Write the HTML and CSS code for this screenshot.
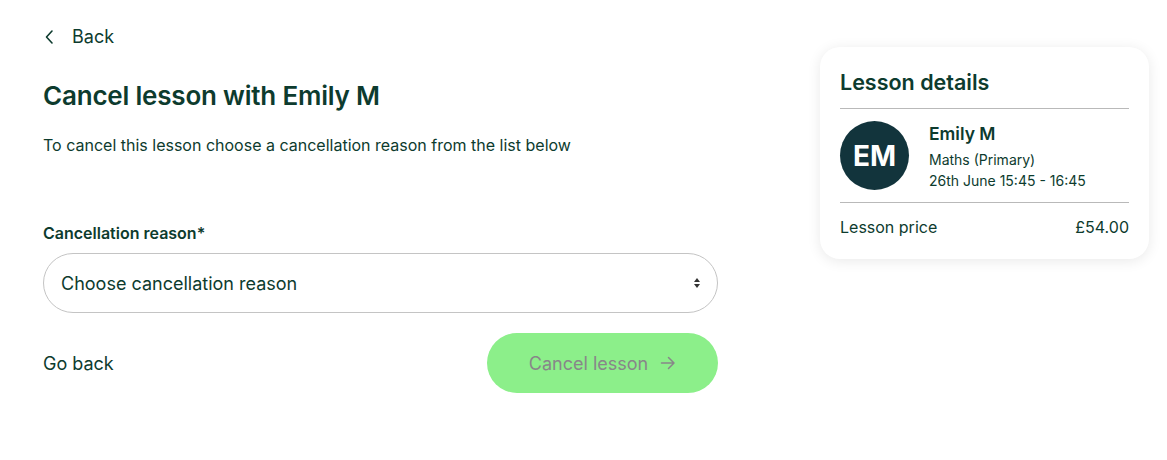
FILE: index.html
```html
<!DOCTYPE html>
<html lang="en">
<head>
    <meta charset="UTF-8">
    <meta name="viewport" content="width=device-width, initial-scale=1.0">
    <title>Cancel lesson</title>
    <link rel="stylesheet" href="styles.css">
</head>
<body>
    <div class="page">
        <!-- Main form column -->
        <main class="main">
            <a class="back-link" href="#">
                <svg class="back-icon" width="12" height="16" viewBox="0 0 12 16" fill="none">
                    <path d="M8 2 L2.5 8 L8 14" stroke="#0d3b2e" stroke-width="1.6" stroke-linecap="round" stroke-linejoin="round"/>
                </svg>
                <span>Back</span>
            </a>

            <h1 class="title">Cancel lesson with Emily M</h1>
            <p class="intro">To cancel this lesson choose a cancellation reason from the list below</p>

            <label class="field-label" for="reason">Cancellation reason*</label>
            <div class="select-wrap">
                <select id="reason" class="select">
                    <option>Choose cancellation reason</option>
                </select>
                <svg class="select-arrows" width="8" height="12" viewBox="0 0 8 12">
                    <path d="M4 1 L7 5 H1 Z" fill="#333"/>
                    <path d="M4 11 L7 7 H1 Z" fill="#333"/>
                </svg>
            </div>

            <div class="actions">
                <a class="go-back" href="#">Go back</a>
                <button class="btn-cancel" disabled>
                    Cancel lesson
                    <svg width="16" height="14" viewBox="0 0 16 14" fill="none">
                        <path d="M1.5 7 H14 M8.5 1.5 L14 7 L8.5 12.5" stroke="#888689" stroke-width="1.5" stroke-linecap="round" stroke-linejoin="round"/>
                    </svg>
                </button>
            </div>
        </main>

        <!-- Lesson summary card -->
        <aside class="card">
            <h2 class="card-title">Lesson details</h2>
            <div class="tutor">
                <div class="avatar">EM</div>
                <div class="tutor-info">
                    <div class="tutor-name">Emily M</div>
                    <div class="tutor-meta">Maths (Primary)</div>
                    <div class="tutor-meta">26th June 15:45 - 16:45</div>
                </div>
            </div>
            <div class="price-row">
                <span>Lesson price</span>
                <span>£54.00</span>
            </div>
        </aside>
    </div>
</body>
</html>
```

FILE: styles.css
```css
body {
    margin: 0;
    font-family: Inter, "Noto Sans", sans-serif;
    color: #0d3b2e;
    background-color: #fff;
}
.page {
    display: flex;
    align-items: flex-start;
    padding: 0 18px 0 43px;
}
.main {
    width: 675px;
    padding-top: 26px;
}
.back-link {
    display: inline-flex;
    align-items: center;
    gap: 16px;
    color: #0d3b2e;
    text-decoration: none;
    font-size: 18px;
    line-height: 22px;
}
.back-icon {
    margin-left: 1px;
}
.title {
    margin: 30px 0 0;
    font-size: 26px;
    line-height: 34px;
    font-weight: 600;
    letter-spacing: -0.2px;
}
.intro {
    margin: 22px 0 0;
    font-size: 16px;
    line-height: 20px;
}
.field-label {
    display: block;
    margin-top: 68px;
    font-size: 16px;
    line-height: 20px;
    font-weight: 600;
}
.select-wrap {
    position: relative;
    margin-top: 10px;
}
.select {
    width: 100%;
    height: 60px;
    padding: 0 40px 0 17px;
    border: 1px solid #c4c4c4;
    border-radius: 30px;
    background: #fff;
    font-family: inherit;
    font-size: 18px;
    color: #0d3b2e;
    appearance: none;
    -webkit-appearance: none;
}
.select-arrows {
    position: absolute;
    right: 17px;
    top: 24px;
}
.actions {
    display: flex;
    justify-content: space-between;
    align-items: center;
    margin-top: 20px;
}
.go-back {
    color: #0d3b2e;
    text-decoration: none;
    font-size: 18px;
}
.btn-cancel {
    display: flex;
    align-items: center;
    justify-content: center;
    gap: 12px;
    width: 231px;
    height: 60px;
    border: none;
    border-radius: 30px;
    background-color: #8cef8a;
    color: #888689;
    font-family: inherit;
    font-size: 18px;
}
.card {
    margin-left: auto;
    margin-top: 47px;
    width: 289px;
    padding: 21px 20px 22px;
    background: #fff;
    border-radius: 20px;
    box-shadow: 0 2px 14px rgba(0, 0, 0, 0.09);
}
.card-title {
    margin: 0;
    font-size: 21.5px;
    line-height: 28px;
    font-weight: 600;
    padding-bottom: 12px;
    border-bottom: 1px solid #b9b9b9;
}
.tutor {
    display: flex;
    align-items: flex-start;
    gap: 20px;
    padding: 12px 0 11px;
    border-bottom: 1px solid #b9b9b9;
}
.avatar {
    width: 69px;
    height: 69px;
    border-radius: 50%;
    background-color: #12343c;
    color: #fff;
    display: flex;
    align-items: center;
    justify-content: center;
    font-size: 28px;
    font-weight: 700;
    flex-shrink: 0;
}
.tutor-info {
    margin-top: 2px;
}
.tutor-name {
    font-size: 17.5px;
    line-height: 22px;
    font-weight: 600;
    margin-bottom: 4px;
}
.tutor-meta {
    font-size: 14px;
    line-height: 21px;
}
.price-row {
    display: flex;
    justify-content: space-between;
    padding-top: 14px;
    font-size: 16px;
    line-height: 20px;
}
```
